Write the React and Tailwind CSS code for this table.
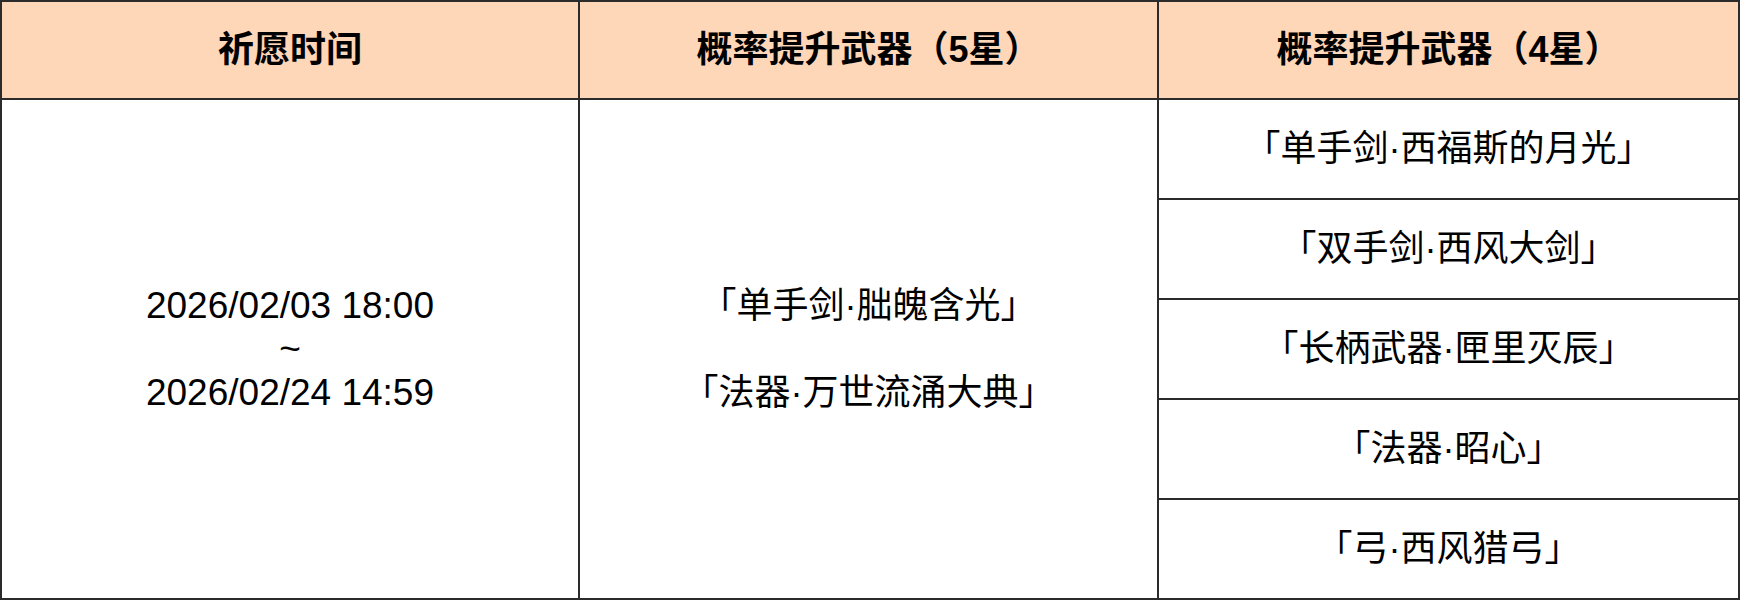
import React from 'react';

const font = "font-['Liberation_Sans','Noto_Sans_CJK_SC',sans-serif]";

const weapons4 = [
  '「单手剑·西福斯的月光」',
  '「双手剑·西风大剑」',
  '「长柄武器·匣里灭辰」',
  '「法器·昭心」',
  '「弓·西风猎弓」',
];

function HeadCell({ children, last }) {
  return (
    <div
      className={`flex items-center justify-center bg-[#fed6b8] border-b-2 border-[#2b2b2b] text-[36px] font-bold text-black ${last ? '' : 'border-r-2'}`}
    >
      {children}
    </div>
  );
}

export default function App() {
  return (
    <div className={`w-[1740px] h-[600px] bg-white ${font}`}>
      <div className="w-full h-full border-2 border-[#2b2b2b] grid grid-cols-[578px_579px_1fr] grid-rows-[98px_1fr]">
        <HeadCell>祈愿时间</HeadCell>
        <HeadCell>概率提升武器（5星）</HeadCell>
        <HeadCell last>概率提升武器（4星）</HeadCell>

        {/* time range */}
        <div className="flex flex-col items-center justify-center border-r-2 border-[#2b2b2b] text-[37px] leading-[43.5px] text-black">
          <div>2026/02/03 18:00</div>
          <div>~</div>
          <div>2026/02/24 14:59</div>
        </div>

        {/* 5 star */}
        <div className="flex flex-col items-center justify-center border-r-2 border-[#2b2b2b] text-[36px] leading-[43.5px] text-black">
          <div>「单手剑·朏魄含光」</div>
          <div className="h-[43.5px]" />
          <div>「法器·万世流涌大典」</div>
        </div>

        {/* 4 star */}
        <div className="flex flex-col">
          {weapons4.map((w, i) => (
            <div
              key={w}
              className={`flex items-center justify-center text-[36px] text-black ${i < weapons4.length - 1 ? 'h-[100px] border-b-2 border-[#2b2b2b]' : 'flex-1'}`}
            >
              {w}
            </div>
          ))}
        </div>
      </div>
    </div>
  );
}
